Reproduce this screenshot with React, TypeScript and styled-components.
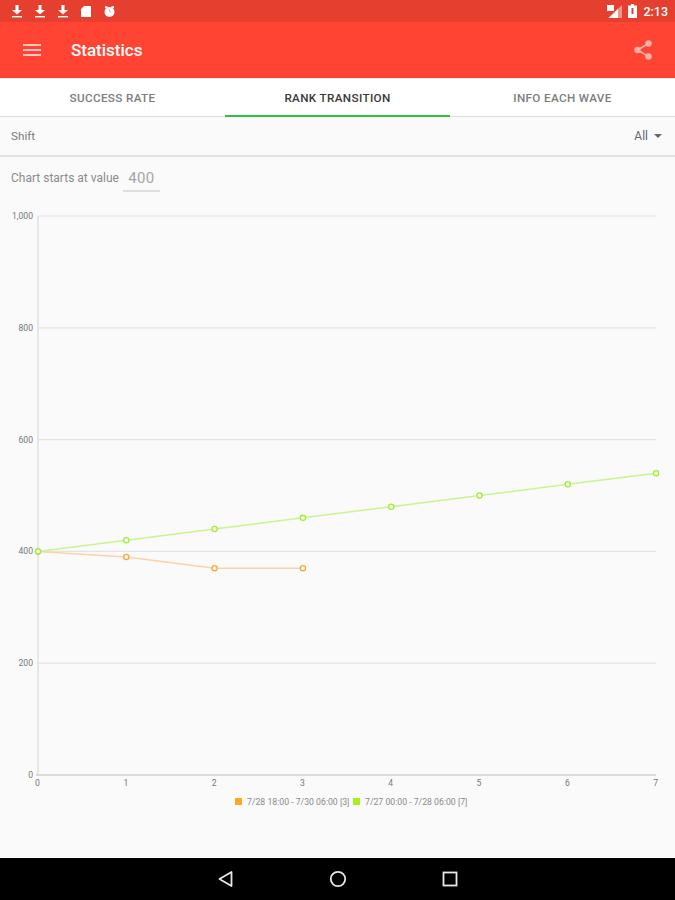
import React from "react";
import styled, { createGlobalStyle } from "styled-components";

const Global = createGlobalStyle`
  html, body { margin: 0; padding: 0; background: #fafafa; }
  body { font-family: Roboto, "Liberation Sans", sans-serif; }
`;
const Page = styled.div`
  width: 675px; height: 900px; display: flex; flex-direction: column; overflow: hidden; background: #fafafa;
`;
const StatusBar = styled.div`
  height: 22px; background: #e53f2f; display: flex; align-items: center; justify-content: space-between;
  padding: 0 7px 0 11px; color: #fff; flex: none;
`;
const StatusGroup = styled.div<{ $gap: number }>`
  display: flex; align-items: center; gap: ${p => p.$gap}px;
`;
const Clock = styled.span`
  font-size: 12.5px; font-weight: 500; color: #fff;
`;
const AppBar = styled.header`
  height: 56px; background: #ff4433; display: flex; align-items: center; padding: 0 22px 0 23px; flex: none;
`;
const Title = styled.h1`
  margin: 0 0 0 30px; font-size: 17px; font-weight: 500; color: #fff; flex: 1;
`;
const Tabs = styled.nav`
  height: 38px; background: #fff; display: grid; grid-template-columns: 225px 225px 225px; flex: none;
  border-bottom: 1px solid #dcdcdc; box-shadow: inset 0 1px 0 #ededed;
`;
const Tab = styled.div<{ $active?: boolean }>`
  display: flex; align-items: center; justify-content: center; font-size: 11.7px; font-weight: 500; letter-spacing: .35px;
  color: ${p => (p.$active ? "#3a3a3a" : "#7d7d7d")};
  border-bottom: 2px solid ${p => (p.$active ? "#2fc13a" : "transparent")};
  margin-bottom: -1px; padding-top: 3px; box-sizing: border-box;
`;
const ShiftRow = styled.div`
  height: 38px; display: flex; align-items: center; justify-content: space-between; padding: 0 13px 0 11px;
  border-bottom: 2px solid #e2e2e2; flex: none; font-size: 11.7px; color: #7b7b7b;
`;
const Select = styled.div`
  display: flex; align-items: center; gap: 6px; color: #666; font-size: 12px;
`;
const Caret = styled.span`
  width: 0; height: 0; border-left: 4px solid transparent; border-right: 4px solid transparent; border-top: 4px solid #666;
`;
const ValueRow = styled.div`
  height: 41px; display: flex; align-items: center; padding: 0 0 0 11px; gap: 4px; flex: none;
  font-size: 12px; color: #8b8b8b;
`;
const ValueInput = styled.div`
  width: 37px; height: 24px; box-sizing: border-box; border-bottom: 2px solid #dedede; text-align: center;
  font-size: 15px; line-height: 21px; color: #a6a6a6; margin-top: 4px; letter-spacing: .3px;
`;
const Chart = styled.svg`
  display: block; flex: 1; width: 675px; min-height: 0;
`;
const NavBar = styled.div`
  height: 42px; background: #000; display: flex; align-items: center; justify-content: space-between;
  padding: 0 217px 0 217px; flex: none;
`;

const X0 = 38, STEP = 88.3;
const OFFSET = 198;
const px = (i: number) => X0 + i * STEP;
const py = (v: number) => 775 - OFFSET - (v * 559) / 1000;
const orange = [400, 390, 370, 370];
const green = [400, 420, 440, 460, 480, 500, 520, 540];

const Series = ({ data, line, dot }: { data: number[]; line: string; dot: string }) => (
  <g>
    <polyline points={data.map((v, i) => `${px(i)},${py(v)}`).join(" ")} fill="none" stroke={line} strokeWidth="1.5" />
    {data.map((v, i) => (
      <circle key={i} cx={px(i)} cy={py(v)} r="2.6" fill="#fafafa" stroke={dot} strokeWidth="1.3" />
    ))}
  </g>
);

const Download = () => (
  <svg width="12" height="14" viewBox="0 0 12 14">
    <path d="M4.5 1h3v5H11L6 10.5 1 6h3.5z" fill="#fff" />
    <rect x="1" y="12" width="10" height="1.4" fill="#fff" />
  </svg>
);

export default function App() {
  return (
    <Page>
      <Global />
      <StatusBar>
        <StatusGroup $gap={11}>
          <Download />
          <Download />
          <Download />
          <svg width="12" height="13" viewBox="0 0 12 13">
            <path d="M4 1h7v11H1V4z" fill="#fff" />
          </svg>
          <svg width="13" height="13" viewBox="0 0 13 13">
            <circle cx="6.5" cy="7" r="5" fill="#fff" />
            <rect x="2" y="1.2" width="2.5" height="2" fill="#fff" />
            <rect x="8.5" y="1.2" width="2.5" height="2" fill="#fff" />
            <path d="M6.5 4.5V7H8.5" stroke="#f1b5ab" fill="none" />
          </svg>
        </StatusGroup>
        <StatusGroup $gap={6}>
          <svg width="15" height="13" viewBox="0 0 15 13">
            <path d="M15 0v13H1z" fill="#fff" opacity=".45" />
            <path d="M11 4v9H2z" fill="#fff" />
            <rect x="0" y="0" width="7" height="6" fill="#fff" />
          </svg>
          <svg width="9" height="14" viewBox="0 0 9 14">
            <path d="M3 0h3v1.5h3V14H0V1.5h3z" fill="#fff" />
            <rect x="3.5" y="4" width="2" height="6" fill="#e53f2f" />
          </svg>
          <Clock>2:13</Clock>
        </StatusGroup>
      </StatusBar>
      <AppBar>
        <svg width="18" height="12" viewBox="0 0 18 12">
          <path d="M0 1h18M0 6h18M0 11h18" stroke="#fff" strokeWidth="1.7" opacity=".92" />
        </svg>
        <Title>Statistics</Title>
        <svg width="20" height="22" viewBox="0 0 20 22">
          <path d="M15.5 4.5 4.5 11l11 6.5" stroke="#f3b3a8" strokeWidth="1.5" fill="none" />
          <circle cx="15.5" cy="4.5" r="3.2" fill="#f3b3a8" />
          <circle cx="4.5" cy="11" r="3.2" fill="#f3b3a8" />
          <circle cx="15.5" cy="17.5" r="3.2" fill="#f3b3a8" />
        </svg>
      </AppBar>
      <Tabs>
        <Tab>SUCCESS RATE</Tab>
        <Tab $active>RANK TRANSITION</Tab>
        <Tab>INFO EACH WAVE</Tab>
      </Tabs>
      <ShiftRow>
        <span>Shift</span>
        <Select>
          All <Caret />
        </Select>
      </ShiftRow>
      <ValueRow>
        <span>Chart starts at value</span>
        <ValueInput>400</ValueInput>
      </ValueRow>
      <Chart viewBox="0 0 675 660">
        {[0, 200, 400, 600, 800, 1000].map(v => (
          <g key={v}>
            {v > 0 && <line x1={X0} x2={656} y1={py(v)} y2={py(v)} stroke="#e4e4e4" strokeWidth="1.2" />}
            <text x={33} y={py(v) + 3} textAnchor="end" fontSize="8.6" fill="#777">
              {v === 1000 ? "1,000" : v}
            </text>
          </g>
        ))}
        <line x1={X0} x2={X0} y1={py(1000)} y2={py(0)} stroke="#dedede" strokeWidth="1.4" />
        <line x1={X0 - 2} x2={656} y1={py(0)} y2={py(0)} stroke="#bdbdbd" strokeWidth="1.2" />
        {green.map((_, i) => (
          <text key={i} x={px(i) - 0.5} y={py(0) + 10.5} textAnchor="middle" fontSize="8.6" fill="#777">
            {i}
          </text>
        ))}
        <Series data={orange} line="#fbd3a6" dot="#f8a935" />
        <Series data={green} line="#c8f58f" dot="#a4ec30" />
        <rect x={235} y={600} width={7} height={7} fill="#ffa726" />
        <text x={247} y={606.5} fontSize="8.7" fill="#8a8a8a">7/28 18:00 - 7/30 06:00 [3]</text>
        <rect x={353} y={600} width={7} height={7} fill="#a5f01e" />
        <text x={365} y={606.5} fontSize="8.7" fill="#8a8a8a">7/27 00:00 - 7/28 06:00 [7]</text>
      </Chart>
      <NavBar>
        <svg width="17" height="18" viewBox="0 0 17 18">
          <path d="M14.5 2v14L2.5 9z" fill="none" stroke="#e8e8e8" strokeWidth="1.8" strokeLinejoin="round" />
        </svg>
        <svg width="18" height="18" viewBox="0 0 18 18">
          <circle cx="9" cy="9" r="7.2" fill="none" stroke="#e8e8e8" strokeWidth="1.8" />
        </svg>
        <svg width="16" height="16" viewBox="0 0 16 16">
          <rect x="1.5" y="1.5" width="13" height="13" fill="none" stroke="#e8e8e8" strokeWidth="1.8" />
        </svg>
      </NavBar>
    </Page>
  );
}
